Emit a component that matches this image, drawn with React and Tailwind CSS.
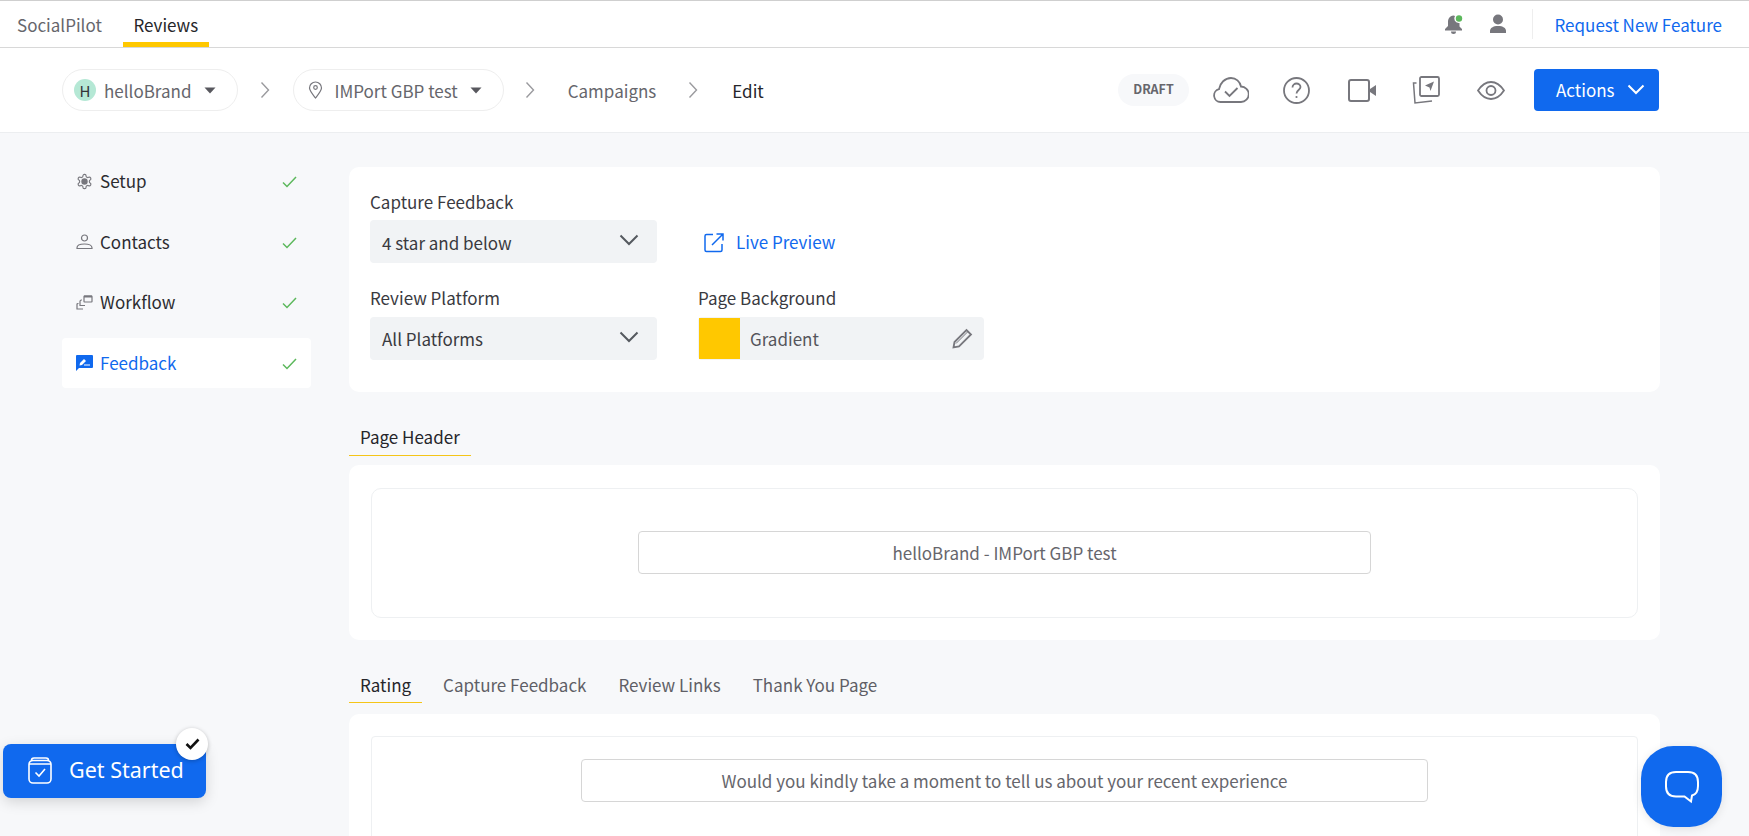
import React from "react";

const Chev = () => (
  <svg width="10" height="18" viewBox="0 0 10 18" fill="none" stroke="#9a9a9e" strokeWidth="1.4" className="shrink-0"><path d="M1.5 1.5 8.5 9 1.5 16.5" /></svg>
);
const Caret = () => (
  <svg width="12" height="7" viewBox="0 0 12 7" fill="#58585e" className="shrink-0"><path d="M0.5 0.5h11L6 6.5z" /></svg>
);
const Down = () => (
  <svg width="20" height="12" viewBox="0 0 20 12" fill="none" stroke="#55595f" strokeWidth="2" className="mb-[4px] shrink-0"><path d="M1.5 1.5 10 10l8.500-8.500" /></svg>
);
const Tick = () => (
  <svg width="15" height="12" viewBox="0 0 15 12" fill="none" stroke="#5cb85c" strokeWidth="1.5" className="mt-[2px] shrink-0"><path d="M1 6.500 5 10.500 14 1" /></svg>
);

const SetupIcon = () => (
  <svg width="17" height="17" viewBox="0 0 24 24" fill="none" stroke="#77777d" strokeWidth="1.600"><path d="M12.220 2h-.44a2 2 0 0 0-2 2v.18a2 2 0 0 1-1 1.730l-.43.25a2 2 0 0 1-2 0l-.15-.08a2 2 0 0 0-2.730.73l-.22.38a2 2 0 0 0 .73 2.730l.15.1a2 2 0 0 1 1 1.720v.51a2 2 0 0 1-1 1.740l-.15.09a2 2 0 0 0-.73 2.730l.22.38a2 2 0 0 0 2.730.73l.15-.08a2 2 0 0 1 2 0l.43.25a2 2 0 0 1 1 1.730V20a2 2 0 0 0 2 2h.44a2 2 0 0 0 2-2v-.18a2 2 0 0 1 1-1.730l.43-.25a2 2 0 0 1 2 0l.15.08a2 2 0 0 0 2.730-.73l.22-.39a2 2 0 0 0-.73-2.730l-.15-.08a2 2 0 0 1-1-1.740v-.5a2 2 0 0 1 1-1.740l.15-.09a2 2 0 0 0 .73-2.730l-.22-.38a2 2 0 0 0-2.730-.73l-.15.08a2 2 0 0 1-2 0l-.43-.25a2 2 0 0 1-1-1.730V4a2 2 0 0 0-2-2z" /><circle cx="12" cy="12" r="4.500" fill="#77777d" stroke="none" /></svg>
);
const ContactIcon = () => (
  <svg width="17" height="16" viewBox="0 0 17 16" fill="none" stroke="#77777d" strokeWidth="1.200"><circle cx="8.500" cy="4" r="3" /><path d="M1 14.500v-.800C1 11.500 4 10 8.500 10S16 11.500 16 13.700v.800z" /></svg>
);
const WorkflowIcon = () => (
  <svg width="17" height="15" viewBox="0 0 17 15" fill="none" stroke="#77777d" strokeWidth="1.200"><rect x="8" y="1" width="8" height="6" rx="0.500" /><path d="M8 1.500h8" strokeWidth="2" /><path d="M6 5H5.500Q4 5 4 6.500V10.500H9" /><path d="M2.500 8.500H2Q1 8.500 1 9.500V14H7" /></svg>
);
const FeedbackIcon = () => (
  <svg width="17" height="16" viewBox="0 0 17 16" fill="#1069ee"><path d="M0 1Q0 0 1 0h15q1 0 1 1v11q0 1-1 1H3l-3 3z" /><path d="M3.500 10.500l.5-2.500 4-4 2 2-4 4z" fill="#fff" /><rect x="8" y="9.500" width="6" height="1" fill="#fff" /></svg>
);

const NavItem = ({ icon, label, active }) => (
  <div className={`flex h-[50px] items-center rounded pl-[14px] pr-[14px] ${active ? "bg-white text-[#1069ee]" : "text-[#2c2c30]"}`}>
    <div className="flex w-[24px] shrink-0 items-center">{icon}</div>
    <span className="mb-[1px] flex-1 text-[17px]">{label}</span>
    <Tick />
  </div>
);

const Tab = ({ label, active, low }) => (
  <div className={`flex h-[36px] items-center border-b px-[11px] text-[17px] ${low ? "pb-0" : "pb-[2px]"} ${active ? "border-[#f5c518] text-[#26262a]" : "border-transparent text-[#5f5f66]"}`}>{label}</div>
);

const Select = ({ label, low }) => (
  <div className="flex h-[43px] w-[287px] items-center justify-between rounded-sm bg-[#f1f3f5] pl-[12px] pr-[18px] text-[17px] text-[#3a3a3f]">
    <span className={low ? "mt-[2px]" : "mb-[1px]"}>{label}</span>
    <Down />
  </div>
);

export default function App() {
  return (
    <div className="relative flex h-[836px] flex-col overflow-hidden bg-[#f7f8fa] font-['Noto_Sans_CJK_JP','Source_Sans_Pro',sans-serif] text-[17px] leading-none">
      <header className="flex h-[48px] shrink-0 items-stretch border-y border-t-[#cfcfcf] border-b-[#d8d8d8] bg-white pl-[17px]">
        <div className="flex items-center text-[#66666c]">SocialPilot</div>
        <div className="ml-[21px] flex w-[86px] items-center justify-center border-b-[5px] border-[#ffc800] pt-[5px] text-[#26262a]">Reviews</div>
        <div className="ml-auto flex items-center">
          <svg width="20" height="20" viewBox="0 0 20 20" fill="#77777d" className="mr-[25px]"><path d="M9.500 1.500C5.500 2 4 5 4 8v4l-3 3v1.500h17V15l-2.500-2.500V9h-1a4.500 4.500 0 0 1-3.500-7z" /><path d="M7 17.500h5a2.500 2.500 0 0 1-5 0z" /><circle cx="15" cy="4.500" r="3.200" fill="#5cb85c" /></svg>
          <svg width="18" height="20" viewBox="0 0 18 20" fill="#77777d" className="mr-[25px]"><circle cx="9" cy="5.500" r="5" /><path d="M1 19v-2c0-3 3-5 8-5s8 2 8 5v2z" /></svg>
          <div className="h-[30px] w-px bg-[#eeeeee]"></div>
          <a className="ml-[22px] mr-[27px] text-[#1069ee]">Request New Feature</a>
        </div>
      </header>

      <nav className="flex h-[85px] shrink-0 items-center border-b border-[#eceef0] bg-white pl-[62px] pr-[90px]">
        <div className="flex h-[42px] items-center rounded-full border border-[#eeeeee] pl-[11px] pr-[21px] text-[#66666c]">
          <span className="mr-[8px] flex h-[22px] w-[22px] items-center justify-center rounded-full bg-[#b5e8d5] text-[15px] text-[#333338]">H</span>
          helloBrand
          <span className="ml-[13px]"><Caret /></span>
        </div>
        <span className="ml-[22px] mr-[23px]"><Chev /></span>
        <div className="flex h-[42px] items-center rounded-full border border-[#eeeeee] pl-[14px] pr-[21px] text-[#66666c]">
          <svg width="15" height="18" viewBox="0 0 15 18" fill="none" stroke="#77777d" strokeWidth="1.200" className="mr-[11px]"><path d="M7.500 17C4 12.500 1.500 9.500 1.500 7a6 6 0 0 1 12 0c0 2.500-2.500 5.500-6 10z" /><circle cx="7.500" cy="6.500" r="1.800" /></svg>
          IMPort GBP test
          <span className="ml-[12px]"><Caret /></span>
        </div>
        <span className="ml-[21px] mr-[33px]"><Chev /></span>
        <span className="text-[#66666c]">Campaigns</span>
        <span className="ml-[32px] mr-[34px]"><Chev /></span>
        <span className="text-[#26262a]">Edit</span>

        <div className="ml-auto flex items-center">
          <span className="flex h-[32px] w-[71px] items-center justify-center rounded-full bg-[#f7f8fa] pb-[2px] text-[12.500px] font-semibold text-[#66666c]">DRAFT</span>
          <svg width="36" height="26" viewBox="0 0 36 26" fill="none" stroke="#77777d" strokeWidth="1.800" className="ml-[24px]"><path d="M9 25H7.500A6.500 6.500 0 0 1 6 12.200C7 6 12 1 18 1c5 0 9 3.500 10 8.500a7.700 7.700 0 0 1 0 15.500z" /><path d="M12 14.500l4.500 4.500 8-8" /></svg>
          <svg width="27" height="27" viewBox="0 0 27 27" fill="none" stroke="#77777d" strokeWidth="1.800" className="ml-[34px]"><circle cx="13.500" cy="13.500" r="12.500" /><path d="M9.500 10.500c0-2.500 2-4 4-4s4 1.500 4 3.500c0 3-4 3-4 6.500" /><circle cx="13.500" cy="20" r="1.100" fill="#77777d" stroke="none" /></svg>
          <svg width="28" height="23" viewBox="0 0 28 23" fill="none" className="ml-[38px]"><rect x="1" y="1" width="20" height="21" rx="2" stroke="#77777d" strokeWidth="2" /><path d="M22 10l6-4v11l-6-4z" fill="#77777d" /></svg>
          <svg width="28" height="28" viewBox="0 0 28 28" fill="none" stroke="#77777d" className="ml-[36px]"><rect x="8" y="1" width="19" height="19" rx="1.500" strokeWidth="1.800" /><path d="M13 9.500 22 5.500 18.500 15l-1-3.500z" fill="#77777d" stroke="none" /><path d="M4.500 7H1.500L3 27l17-2" strokeWidth="1.500" /></svg>
          <svg width="28" height="19" viewBox="0 0 28 19" fill="none" stroke="#77777d" strokeWidth="1.800" className="ml-[37px]"><path d="M1 9.500C5 3.500 9 1 14 1s9 2.500 13 8.500C23 15.500 19 18 14 18S5 15.500 1 9.500z" /><circle cx="14" cy="9.500" r="4.500" /></svg>
          <button className="ml-[29px] flex h-[42px] w-[125px] items-center gap-[12px] rounded-sm bg-[#1069ee] pl-[22px] pb-[1px] text-white">
            Actions
            <svg width="18" height="11" viewBox="0 0 18 11" fill="none" stroke="#fff" strokeWidth="2"><path d="M1.500 1.500 9 9l7.500-7.500" /></svg>
          </button>
        </div>
      </nav>

      <div className="flex min-h-0 flex-1 pl-[62px] pr-[89px] pt-[23px]">
        <aside className="flex w-[249px] shrink-0 flex-col gap-[10.500px]">
          <NavItem icon={<SetupIcon />} label="Setup" />
          <NavItem icon={<ContactIcon />} label="Contacts" />
          <NavItem icon={<WorkflowIcon />} label="Workflow" />
          <NavItem icon={<FeedbackIcon />} label="Feedback" active />
        </aside>

        <main className="ml-[38px] min-w-0 flex-1 pt-[11px]">
          <section className="h-[225px] rounded-[10px] bg-white px-[21px] pt-[25px] text-[#3a3a3f]">
            <div className="flex">
              <div>
                <div className="mb-[8px] h-[20px] leading-[20px]">Capture Feedback</div>
                <Select label="4 star and below" low />
              </div>
              <div className="ml-[47px] mt-[31px] flex items-center text-[#1069ee]">
                <svg width="20" height="20" viewBox="0 0 20 20" fill="none" stroke="#1069ee" strokeWidth="1.500"><path d="M9 1.500H2.500q-1.500 0-1.500 1.500v14q0 1.500 1.500 1.500h14q1.500 0 1.500-1.500V11" /><path d="M8 12 19 1M12.500 1H19v6.500" /></svg>
                <span className="mb-[4px] ml-[12px]">Live Preview</span>
              </div>
            </div>
            <div className="mt-[25px] flex">
              <div>
                <div className="mb-[9px] h-[20px] leading-[20px]">Review Platform</div>
                <Select label="All Platforms" />
              </div>
              <div className="ml-[41px]">
                <div className="mb-[9px] h-[20px] leading-[20px]">Page Background</div>
                <div className="flex h-[43px] w-[286px] items-center rounded-sm bg-[#f1f3f5] pl-px pr-[11px]">
                  <div className="h-[41px] w-[41px] bg-[#ffc800]"></div>
                  <span className="ml-[10px] flex-1 text-[#55555b]">Gradient</span>
                  <svg width="21" height="21" viewBox="0 0 21 21" fill="none" stroke="#77777d" strokeWidth="1.800"><path d="M1.500 19.500 2.500 14 14.500 2 19 6.500 7 18.500z" /><path d="M4 15.500 15.500 4" strokeWidth="1" /></svg>
                </div>
              </div>
            </div>
          </section>

          <div className="mt-[28px] flex h-[36px]"><Tab label="Page Header" active /></div>
          <section className="mt-[9px] h-[175px] rounded-[10px] bg-white px-[22px] pt-[23px]">
            <div className="flex h-[130px] items-start justify-center rounded-[10px] border border-[#eef0f2] pt-[42px]">
              <div className="flex h-[43px] w-[733px] items-center justify-center rounded-sm border border-[#d6d6d6] text-[#66666c]">helloBrand - IMPort GBP test</div>
            </div>
          </section>

          <div className="mt-[27px] flex h-[36px]">
            <Tab label="Rating" active low />
            <div className="ml-[10px] flex"><Tab label="Capture Feedback" low /></div>
            <div className="ml-[10px] flex"><Tab label="Review Links" low /></div>
            <div className="ml-[10px] flex"><Tab label="Thank You Page" low /></div>
          </div>
          <section className="mt-[11px] h-[200px] rounded-[10px] bg-white px-[22px] pt-[22px]">
            <div className="flex h-[200px] items-start justify-center rounded-t-sm border border-[#eef0f2] pt-[22px]">
              <div className="flex h-[43px] w-[847px] items-center justify-center rounded-sm border border-[#d6d6d6] text-[#66666c]">Would you kindly take a moment to tell us about your recent experience</div>
            </div>
          </section>
        </main>
      </div>

      <div className="absolute left-[3px] top-[744px] flex h-[54px] w-[203px] items-center rounded-lg bg-[#1069ee] pb-[2px] pl-[25px] font-['Noto_Sans',sans-serif] text-[21.500px] text-white shadow-[0_4px_14px_rgba(0,0,0,0.15)]">
        <svg width="24" height="27" viewBox="0 0 24 27" fill="none" stroke="#fff" strokeWidth="1.600" className="mr-[17px]"><rect x="1" y="3.500" width="22" height="22.500" rx="4" /><path d="M3.500 3.500Q3.500 1 6 1h12q2.500 0 2.500 2.500M1 7h22" /><path d="M7.500 15.500l3.500 3.500 6-7" /></svg>
        Get Started
      </div>
      <div className="absolute left-[176px] top-[728px] flex h-[32px] w-[32px] items-center justify-center rounded-full bg-white shadow-[0_1px_4px_rgba(0,0,0,0.25)]">
        <svg width="15" height="12" viewBox="0 0 15 12" fill="none" stroke="#111" strokeWidth="2.600"><path d="M1.500 6 5.500 10 13.500 1.500" /></svg>
      </div>
      <div className="absolute left-[1641px] top-[746px] flex h-[81px] w-[81px] items-center justify-center rounded-[40%] bg-[#1069ee] shadow-[0_2px_10px_rgba(0,0,0,0.1)]">
        <svg width="36" height="34" viewBox="0 0 36 34" fill="none" stroke="#fff" strokeWidth="2"><path d="M12 2h12q10 0 10 10v4q0 8-6 9.500l-1 6-6.500-5H12q-10 0-10-10V12Q2 2 12 2z" /></svg>
      </div>
    </div>
  );
}
